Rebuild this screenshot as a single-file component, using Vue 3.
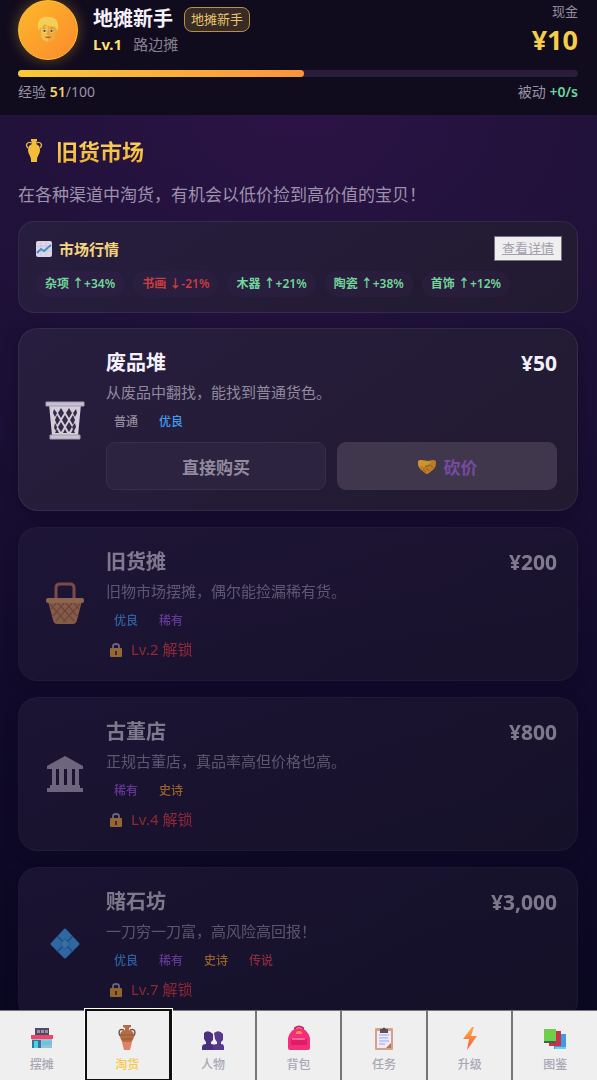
<script setup>
import { ref } from 'vue'

const exp = 51
const expMax = 100

const trends = [
  { name: '杂项', change: 34 },
  { name: '书画', change: -21 },
  { name: '木器', change: 21 },
  { name: '陶瓷', change: 38 },
  { name: '首饰', change: 12 }
]

const rarity = {
  普通: 'common',
  优良: 'fine',
  稀有: 'rare',
  史诗: 'epic',
  传说: 'legend'
}

const sources = [
  { id: 'bin', name: '废品堆', desc: '从废品中翻找，能找到普通货色。', price: '50', tags: ['普通', '优良'] },
  { id: 'basket', name: '旧货摊', desc: '旧物市场摆摊，偶尔能捡漏稀有货。', price: '200', tags: ['优良', '稀有'], level: 2 },
  { id: 'temple', name: '古董店', desc: '正规古董店，真品率高但价格也高。', price: '800', tags: ['稀有', '史诗'], level: 4 },
  { id: 'gem', name: '赌石坊', desc: '一刀穷一刀富，高风险高回报！', price: '3,000', tags: ['优良', '稀有', '史诗', '传说'], level: 7 }
]

const tabs = [
  { id: 'stall', label: '摆摊' },
  { id: 'hunt', label: '淘货' },
  { id: 'people', label: '人物' },
  { id: 'bag', label: '背包' },
  { id: 'task', label: '任务' },
  { id: 'upgrade', label: '升级' },
  { id: 'book', label: '图鉴' }
]
const activeTab = ref('hunt')
</script>

<template>
  <div class="game">
    <header class="top-bar">
      <div class="player">
        <div class="avatar">
          <svg viewBox="0 0 32 32" width="28" height="28">
            <path d="M6 15C4 6 9 2 17 2c8 0 11 6 9 14l-2 9c-2 5-14 5-16 0z" fill="#dfb03a" />
            <path d="M8 13c3 0 6-1 8-3 2 2 5 3 8 3v8c0 5-4 8-8 8s-8-3-8-8z" fill="#f5c04a" />
            <path d="M16 10c2 2 5 3 8 3v8c0 5-4 8-8 8z" fill="#f0a93a" />
            <path d="M5 16C2 5 9 0 17 1c9 0 12 7 10 16l-3-5c-5 0-9-1-12-3-1 2-3 4-4 4z" fill="#f3cf58" />
            <path d="M10 14q2-1 3 0M19 14q2-1 3 0" stroke="#c17d19" fill="none" />
            <circle cx="12" cy="17" r="1.8" fill="#e8dfce" />
            <circle cx="20" cy="17" r="1.8" fill="#e8dfce" />
            <circle cx="12" cy="17" r="1.3" fill="#4f3d38" />
            <circle cx="20" cy="17" r="1.3" fill="#4f3d38" />
            <path d="M16 17v4h-1" stroke="#d88d24" fill="none" />
            <path d="M13 24q3 1 6 0" stroke="#a34d26" stroke-width="1.5" fill="none" />
          </svg>
        </div>
        <div class="player-info">
          <div class="name-row">
            <h1 class="player-name">地摊新手</h1>
            <span class="badge">地摊新手</span>
          </div>
          <div class="level-row"><b>Lv.1</b><span>路边摊</span></div>
        </div>
        <div class="cash">
          <span class="cash-label">现金</span>
          <span class="cash-value">¥10</span>
        </div>
      </div>
      <div class="exp-bar">
        <div class="exp-fill" :style="{ width: (exp / expMax) * 100 + '%' }"></div>
      </div>
      <div class="exp-row">
        <span>经验 <b class="gold">{{ exp }}</b>/{{ expMax }}</span>
        <span>被动 <b class="green">+0/s</b></span>
      </div>
    </header>

    <main class="content">
      <h2 class="page-title">
        <svg viewBox="0 0 24 24" width="24" height="24">
          <path d="M9 0h6v2l-1 1v2c3 1 4 3 4 6 0 4-3 6-3 10v2H9v-2c0-4-3-6-3-10 0-3 1-5 4-6V3L9 2z" fill="#f2bd38" />
          <path d="M10 4C5 2 3 6 6 9M14 4c5-2 7 2 4 5" fill="none" stroke="#d9ad4c" stroke-width="1.4" />
        </svg>
        <span>旧货市场</span>
      </h2>
      <p class="page-desc">在各种渠道中淘货，有机会以低价捡到高价值的宝贝！</p>

      <section class="panel market">
        <div class="market-head">
          <h3 class="market-title">
            <svg viewBox="0 0 16 16" width="16" height="16">
              <rect width="16" height="16" rx="2" fill="#ddd5e8" />
              <path d="M0 5h16M0 10h16M5 0v16M10 0v16" stroke="#c3bdd8" stroke-width=".6" />
              <path d="M1 12l4-4 3 2 7-6" fill="none" stroke="#438fc5" stroke-width="1.8" />
            </svg>
            <span>市场行情</span>
          </h3>
          <button type="button" class="detail-btn">查看详情</button>
        </div>
        <div class="trends">
          <span v-for="t in trends" :key="t.name" class="trend" :class="t.change > 0 ? 'up' : 'down'">
            {{ t.name }} {{ t.change > 0 ? '↑+' : '↓' }}{{ t.change }}%
          </span>
        </div>
      </section>

      <article v-for="s in sources" :key="s.id" class="panel source" :class="{ locked: s.level }">
        <div class="source-icon">
          <svg v-if="s.id === 'bin'" viewBox="0 0 40 40" width="40" height="40">
            <path d="M4 4h32l-3 32H7z" fill="#d3cddc" />
            <path d="M9 9l3 4-2 4-2-4zM16 8l3 5-3 5-3-5zM24 8l3 5-3 5-3-5zM31 9l1 4-2 4-2-4zM12 15l3 5-3 5-2-5zM20 15l3 5-3 5-3-5zM28 15l2 5-2 5-3-5zM10 23l2 4-1 4-2-3zM16 22l3 5-3 5-3-5zM24 22l3 5-3 5-3-5zM30 23l1 4-2 4-2-4zM12 29l2 4h-4zM20 29l2 4h-4zM28 29l2 4h-4z" fill="#352b43" />
            <path d="M1 2h38v4H1zM5 35h30v4H5z" fill="#c8c1d1" stroke="#a49cb0" />
          </svg>
          <svg v-else-if="s.id === 'basket'" viewBox="0 0 40 40" width="40" height="40">
            <path d="M11 17V4q0-4 4-4h10q4 0 4 4v13" fill="none" stroke="#bf7558" stroke-width="3" />
            <path d="M3 17h34l-5 19q-1 4-4 4H12q-3 0-4-4z" fill="#cf9058" />
            <path d="M5 20l16 18M12 18l17 19M20 18l12 14M28 18l6 7M35 20L18 38M28 18L11 37M20 18L8 32M12 18l-6 7" stroke="#a76d45" stroke-width="1.2" />
            <rect x="1" y="14" width="38" height="5" rx="2" fill="#e09f66" />
          </svg>
          <svg v-else-if="s.id === 'temple'" viewBox="0 0 40 40" width="40" height="40" fill="#aca3b6">
            <path d="M20 2l18 10v3H2v-3zM2 34h36v4H2zM5 31h30v3H5zM7 15h4v16H7zM14 15h5v16h-5zM22 15h5v16h-5zM30 15h4v16h-4z" />
          </svg>
          <svg v-else viewBox="0 0 40 40" width="40" height="40">
            <path d="M19 5q1-1 2 0l13 14q1 1 0 2L21 34q-1 1-2 0L6 21q-1-1 0-2z" fill="#45a6f6" />
            <path d="M12 12l16 16M28 12L12 28" stroke="#2d72b0" stroke-width="1.2" />
            <path d="M20 15l5 5-5 5-5-5z" fill="#54b2f4" stroke="#3b8dcc" />
          </svg>
        </div>
        <div class="source-body">
          <div class="source-head">
            <h3 class="source-name">{{ s.name }}</h3>
            <span class="price">¥{{ s.price }}</span>
          </div>
          <p class="source-desc">{{ s.desc }}</p>
          <div class="tags">
            <span v-for="tag in s.tags" :key="tag" class="tag" :class="rarity[tag]">{{ tag }}</span>
          </div>
          <div v-if="s.level" class="lock-row">
            <svg viewBox="0 0 16 16" width="16" height="16">
              <path d="M5 8V4q0-2 3-2t3 2v4" fill="none" stroke="#aca3b6" stroke-width="1.8" />
              <rect x="2" y="6" width="12" height="9" rx="1" fill="#eda439" />
              <path d="M8 9v4" stroke="#683c23" stroke-width="2" />
            </svg>
            <span>Lv.{{ s.level }} 解锁</span>
          </div>
          <div v-else class="actions">
            <button type="button" class="action buy">直接购买</button>
            <button type="button" class="action haggle">
              <svg viewBox="0 0 20 20" width="20" height="20">
                <path d="M1 6q0-2 3-2l6 1 6-1q3 0 3 2 0 5-2 7l-5 4q-2 2-4 0l-5-4Q1 11 1 6z" fill="#b97e26" />
                <path d="M1 6q0-2 3-2l6 1 5 1-5 3q-3 3-5 1L2 11Q1 9 1 6z" fill="#cf942b" />
                <path d="M8 10q2 1 5-1l4 3M6 13l3 3M9 12l3 3" fill="none" stroke="#8f6330" />
              </svg>
              <span>砍价</span>
            </button>
          </div>
        </div>
      </article>
    </main>

    <nav class="tabs">
      <button
        v-for="tab in tabs"
        :key="tab.id"
        type="button"
        class="tab"
        :class="{ active: tab.id === activeTab }"
        @click="activeTab = tab.id"
      >
        <svg v-if="tab.id === 'stall'" viewBox="0 0 26 26" width="26" height="26">
          <path d="M6 3h14v7H6z" fill="#514865" />
          <path d="M8 5h3v3H8zM12 5h3v3h-3zM16 5h3v3h-3z" fill="#9b91a9" />
          <path d="M3 13h20v10H3z" fill="#a9bacd" />
          <path d="M2 10h22v4H2z" fill="#f04468" />
          <path d="M3 15h9v8H3z" fill="#2e7898" />
          <path d="M5 16h4v7H5zM13 16h10v4H13z" fill="#55cdea" />
        </svg>
        <svg v-else-if="tab.id === 'hunt'" viewBox="0 0 26 26" width="26" height="26">
          <path d="M9 0h8v2l-2 1v2c4 1 5 3 5 6 0 4-4 6-4 12v2h-6v-2c0-6-4-8-4-12 0-3 1-5 5-6V3L9 2z" fill="#b56b43" />
          <path d="M10 5C5 3 4 7 6 11M16 5c5-2 6 2 4 6" fill="none" stroke="#765443" stroke-width="1.5" />
          <path d="M7 10h12M8 14h10" stroke="#945a36" />
          <path d="M8 17h10l-2 8h-6z" fill="#e18169" />
        </svg>
        <svg v-else-if="tab.id === 'people'" viewBox="0 0 26 26" width="26" height="26" fill="#49307f">
          <path d="M4 8q4-4 9 1v6l-2 2v2q4 0 4 3v3H2v-3q0-3 4-3v-2l-2-3z" />
          <path d="M14 8q5-4 9 1v6l-2 2v2q3 0 3 3v3H13v-3q0-3 4-3v-2l-2-3z" fill="#57388d" />
        </svg>
        <svg v-else-if="tab.id === 'bag'" viewBox="0 0 26 26" width="26" height="26">
          <path d="M9 7V3q4-3 8 0v4" fill="none" stroke="#c12965" stroke-width="2" />
          <path d="M2 13q3-10 11-10t11 10v10q0 2-2 2H4q-2 0-2-2z" fill="#f52e79" />
          <path d="M5 14q8-3 16 0v6H5z" fill="#e11c66" />
          <path d="M10 7q3-2 6 0v2h-6z" fill="#ff8b54" />
          <path d="M6 14h13" stroke="#ff6895" stroke-width="2" />
        </svg>
        <svg v-else-if="tab.id === 'task'" viewBox="0 0 26 26" width="26" height="26">
          <rect x="4" y="3" width="18" height="22" rx="1" fill="#d9a184" />
          <path d="M6 6h14v17H6z" fill="#eceaff" />
          <path d="M8 10h10M8 13h9M8 16h10M8 19h6" stroke="#9da7d5" />
          <path d="M9 4h2q2-3 4 0h2v4H9z" fill="#59505b" />
          <path d="M20 18v5h-5z" fill="#bb7453" />
        </svg>
        <svg v-else-if="tab.id === 'upgrade'" viewBox="0 0 26 26" width="26" height="26">
          <defs>
            <linearGradient id="bolt" x1="0" y1="0" x2="0" y2="1">
              <stop offset="0" stop-color="#ffad43" />
              <stop offset="1" stop-color="#f05b43" />
            </linearGradient>
          </defs>
          <path d="M15 2L6 14h6l-2 11 10-14h-6l3-9z" fill="url(#bolt)" />
        </svg>
        <svg v-else viewBox="0 0 26 26" width="26" height="26">
          <path d="M12 9h12v15H12z" fill="#3f9ce4" />
          <path d="M13 22h11v2H13z" fill="#67cff2" />
          <path d="M7 6h12v15H7z" fill="#cb304f" />
          <path d="M2 4h12v14H2z" fill="#71ce4b" />
          <path d="M2 16h12v2H2z" fill="#356b45" />
        </svg>
        <span>{{ tab.label }}</span>
      </button>
    </nav>
  </div>
</template>

<style>
body {
  margin: 0;
  background: #0c0822;
}
</style>

<style scoped>
.game {
  display: flex;
  flex-direction: column;
  height: 100vh;
  color: #f4f0fa;
  background:
    radial-gradient(ellipse 70% 30% at 50% 10%, rgba(60, 22, 88, 0.45), transparent),
    linear-gradient(180deg, #1e1236 0%, #1c1036 35%, #110a2a 65%, #090720 100%);
  font-family: "Noto Sans", "Noto Sans CJK SC", sans-serif;
  font-size: 15px;
}

* {
  box-sizing: border-box;
}

h1, h2, h3, p {
  margin: 0;
}

svg {
  flex-shrink: 0;
  overflow: visible;
}

button {
  font-family: inherit;
  cursor: pointer;
}

.top-bar {
  padding: 0 19px 0 18px;
  height: 115px;
  flex-shrink: 0;
  background: #110b1e;
}

.player {
  display: flex;
  align-items: center;
  gap: 15px;
  height: 60px;
}

.avatar {
  display: flex;
  align-items: center;
  justify-content: center;
  width: 60px;
  height: 60px;
  border-radius: 50%;
  border: 1px solid #ffc13d;
  background: linear-gradient(135deg, #fcb92b, #fb8a2c);
  box-shadow: 0 0 14px rgba(251, 191, 36, 0.35);
}

.player-info {
  flex: 1;
  padding-top: 2px;
}

.name-row {
  display: flex;
  align-items: center;
  gap: 11px;
  height: 26px;
}

.player-name {
  font-size: 20px;
  line-height: 26px;
}

.badge {
  padding: 0 6px;
  border: 1px solid #b5924c;
  border-radius: 8px;
  background: #382a24;
  color: #e6c670;
  font-size: 13px;
  line-height: 23px;
}

.level-row {
  display: flex;
  gap: 11px;
  line-height: 24px;
  color: #85808f;
}

.level-row b {
  color: #fddf75;
}

.cash {
  display: flex;
  flex-direction: column;
  align-items: flex-end;
}

.cash-label {
  font-size: 13px;
  line-height: 19px;
  color: #938d9d;
}

.cash-value {
  font-size: 27px;
  line-height: 37px;
  font-weight: 700;
  color: #f5cc4b;
}

.exp-bar {
  height: 7px;
  margin-top: 10px;
  border-radius: 4px;
  background: #281e3b;
}

.exp-fill {
  height: 100%;
  border-radius: 4px;
  background: linear-gradient(90deg, #f9ca36, #fb943b);
}

.exp-row {
  display: flex;
  justify-content: space-between;
  margin-top: 4px;
  font-size: 14px;
  line-height: 22px;
  color: #9a94a4;
}

.exp-row b {
  font-weight: 600;
}

.gold {
  color: #f5d66c;
}

.green {
  color: #6bd59b;
}

.content {
  flex: 1;
  min-height: 0;
  overflow-y: auto;
  scrollbar-width: none;
  padding: 20px 19px 20px 18px;
}

.page-title {
  display: flex;
  align-items: center;
  gap: 10px;
  padding-left: 4px;
  font-size: 22px;
  line-height: 32px;
  color: #f6c544;
}

.page-title span {
  background: linear-gradient(180deg, #fcd863, #efb02f);
  background-clip: text;
  -webkit-text-fill-color: transparent;
}

.page-desc {
  margin: 15px 0 14px;
  font-size: 17px;
  line-height: 25px;
  color: #9d91ab;
}

.panel {
  border: 1px solid rgba(150, 130, 200, 0.14);
  background: linear-gradient(145deg, #271e3f, #211a30);
}

.market {
  padding: 14px 15px 15px 17px;
  border-radius: 16px;
}

.market-head {
  display: flex;
  align-items: center;
  justify-content: space-between;
}

.market-title {
  display: flex;
  align-items: center;
  gap: 7px;
  font-size: 15px;
  color: #f5d57d;
}

.detail-btn {
  padding: 0 7px;
  border: 1px solid #77727d;
  background: #efefef;
  color: #a39faf;
  font-size: 13px;
  line-height: 23px;
  text-decoration: underline;
}

.trends {
  display: flex;
  flex-wrap: wrap;
  gap: 9px;
  margin-top: 10px;
}

.trend {
  padding: 0 9px;
  border-radius: 13px;
  background: rgba(75, 45, 105, 0.14);
  font-size: 12px;
  font-weight: 600;
  line-height: 26px;
}

.up {
  color: #71d69a;
}

.down {
  color: #c83d3e;
}

.source {
  display: flex;
  align-items: center;
  gap: 15px;
  margin-top: 15px;
  padding: 20px;
  border-radius: 20px;
  box-shadow: 0 4px 16px rgba(5, 0, 20, 0.3);
}

.source + .source {
  margin-top: 16px;
}

.source.locked {
  opacity: 0.6;
  border-color: rgba(150, 130, 200, 0.1);
  background: linear-gradient(145deg, #231b3b, #1c172c);
}

.source-icon {
  display: flex;
  justify-content: center;
  width: 52px;
}

.source-body {
  flex: 1;
}

.source-head {
  display: flex;
  align-items: center;
  justify-content: space-between;
  height: 28px;
}

.source-name {
  font-size: 20px;
  line-height: 28px;
}

.locked .source-name,
.locked .price {
  color: #c9c3d0;
}

.price {
  font-size: 21px;
  line-height: 28px;
  font-weight: 700;
}

.source-desc {
  margin-top: 3px;
  font-size: 15px;
  line-height: 24px;
  color: #91899f;
}

.tags {
  display: flex;
  gap: 5px;
  margin-top: 8px;
}

.tag {
  padding: 0 8px;
  font-size: 12px;
  font-weight: 500;
  line-height: 20px;
}

.common {
  color: #96909e;
}

.fine {
  color: #419bf0;
}

.rare {
  color: #9a57dc;
}

.epic {
  color: #f0a12c;
}

.legend {
  color: #e53e4a;
}

.lock-row {
  display: flex;
  align-items: center;
  gap: 7px;
  margin-top: 8px;
  padding-left: 2px;
  font-size: 15px;
  line-height: 21px;
  color: #e63d40;
}

.actions {
  display: grid;
  grid-template-columns: 1fr 1fr;
  gap: 11px;
  margin-top: 10px;
}

.action {
  display: flex;
  align-items: center;
  justify-content: center;
  gap: 7px;
  height: 48px;
  border: 1px solid #383048;
  border-radius: 9px;
  background: #2b2340;
  color: #928b9f;
  font-size: 17px;
  font-weight: 600;
}

.haggle {
  border-color: #403851;
  background: #40374d;
  color: #754ba0;
}

.tabs {
  display: flex;
  flex-shrink: 0;
  height: 70px;
}

.tab {
  display: flex;
  flex: 1;
  flex-direction: column;
  align-items: center;
  justify-content: center;
  gap: 5px;
  padding: 7px 0 0;
  border: 0 solid #77757b;
  border-top-width: 1px;
  border-right-width: 2px;
  background: #efefef;
  color: #aaa7b4;
  font-size: 12px;
  font-weight: 500;
  line-height: 18px;
}

.tab:last-child {
  border-right-width: 0;
}

.tab.active {
  z-index: 1;
  border-color: #101010;
  outline: 2px solid #101010;
  outline-offset: -1px;
  box-shadow: 0 0 0 2px #ffffff;
  color: #f7c843;
}
</style>
